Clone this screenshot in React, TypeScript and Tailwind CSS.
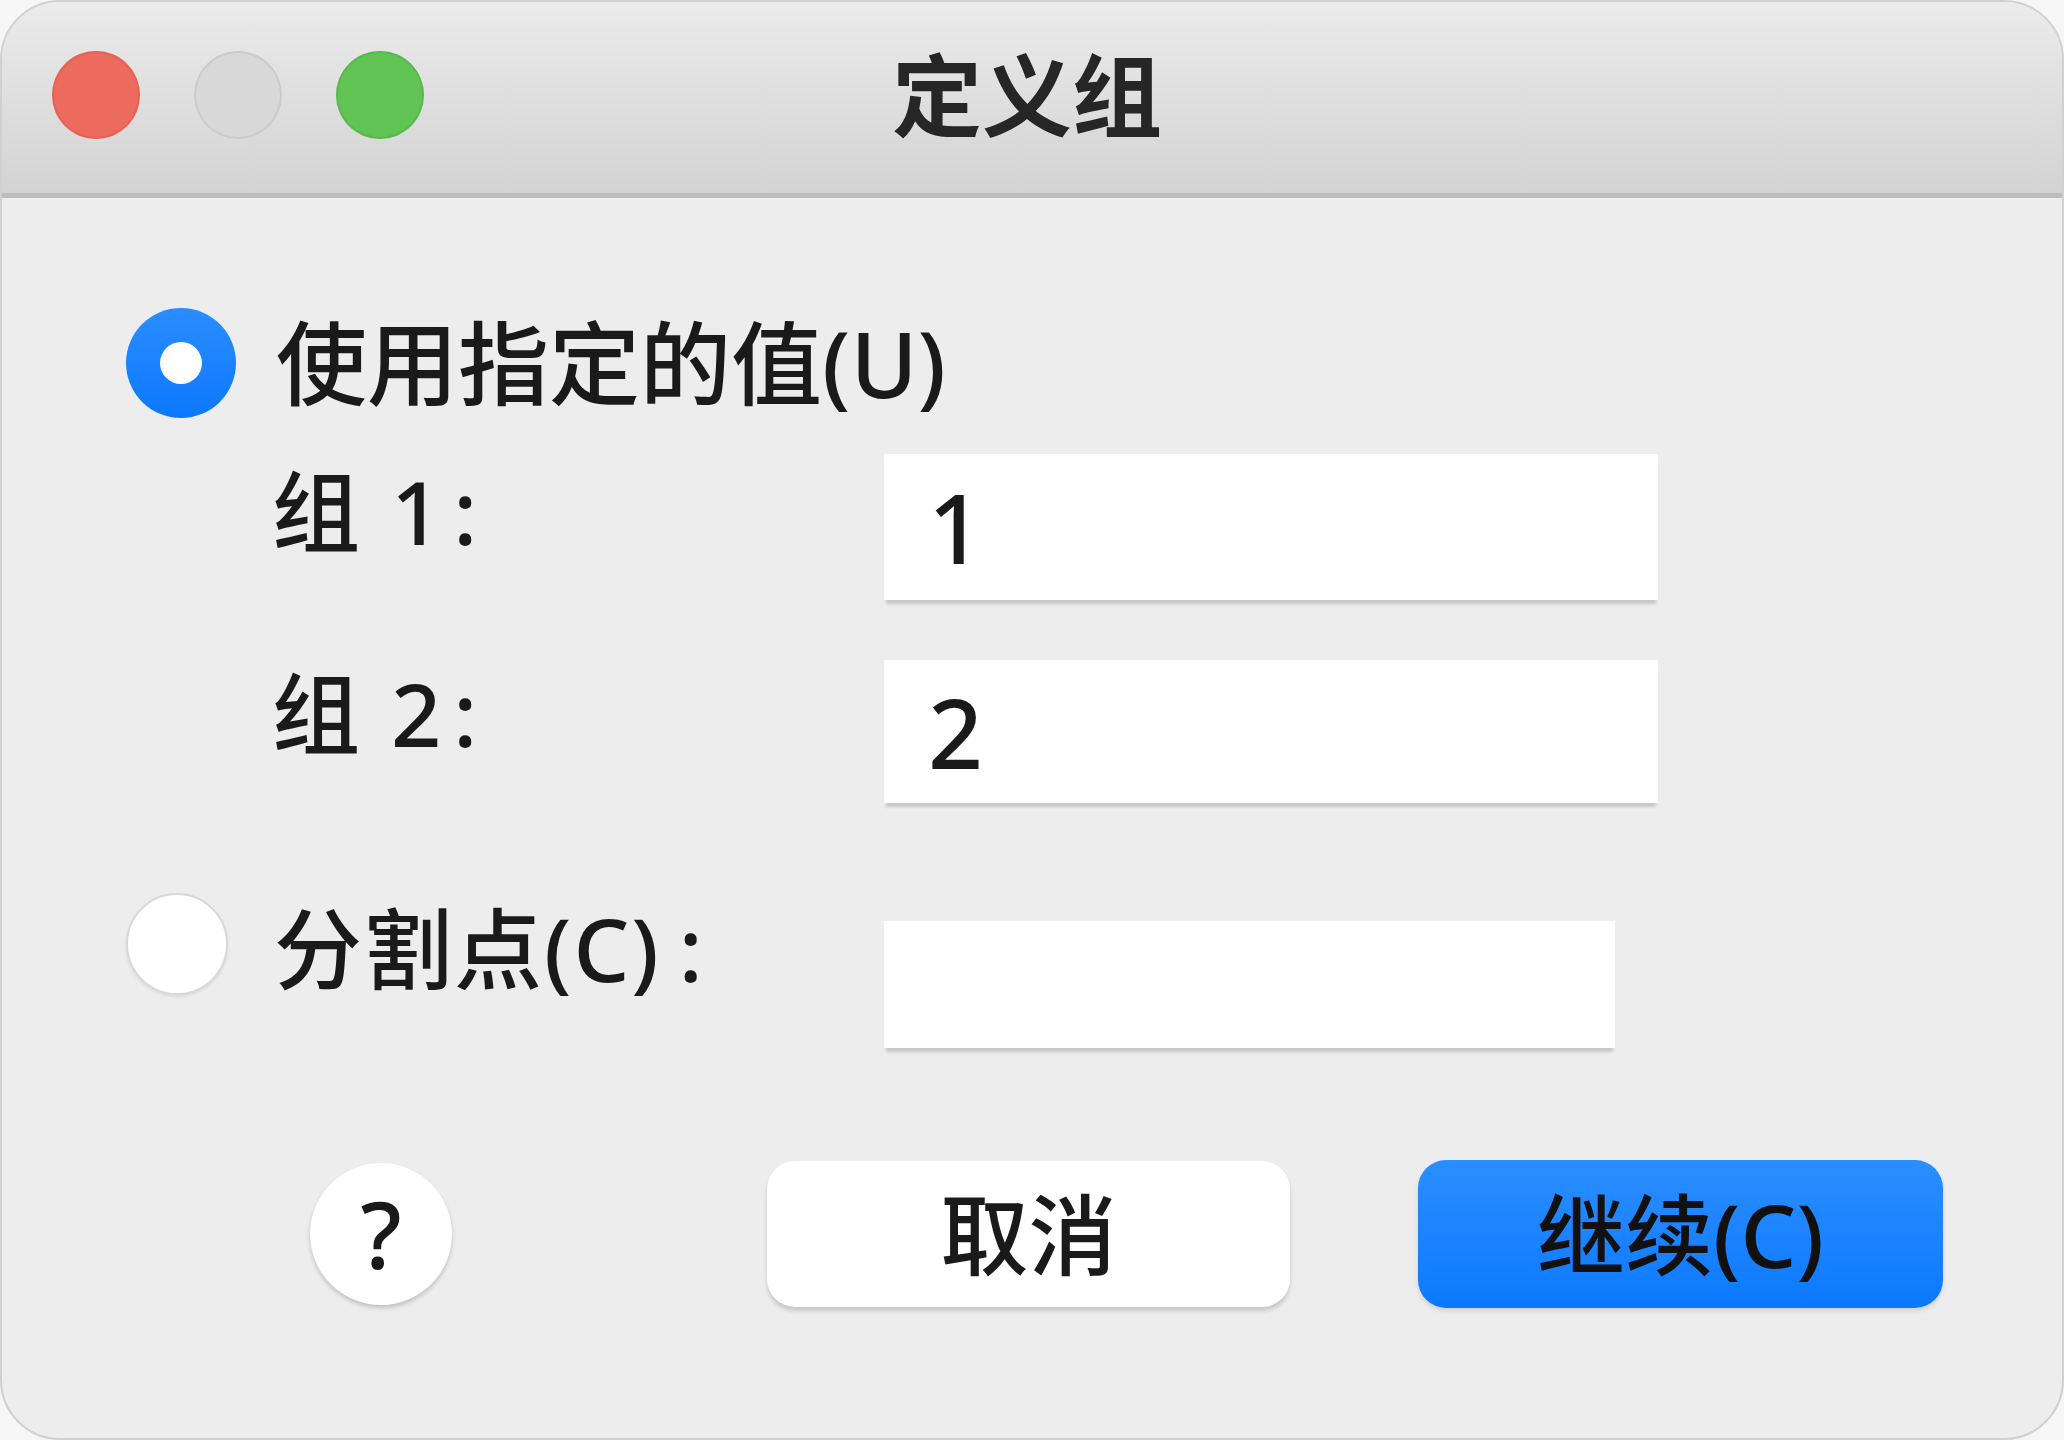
import React from "react";

const font = { fontFamily: '"Noto Sans", "Noto Sans CJK SC", sans-serif' };

function TrafficLights() {
  return (
    <div className="flex items-center gap-[54px] pl-[50px]">
      <span className="block h-[88px] w-[88px] rounded-full bg-[#ed6a5e] shadow-[inset_0_0_0_2px_rgba(208,78,68,0.3)]" />
      <span className="block h-[88px] w-[88px] rounded-full bg-[#d8d8d8] shadow-[inset_0_0_0_2px_rgba(0,0,0,0.06)]" />
      <span className="block h-[88px] w-[88px] rounded-full bg-[#61c454] shadow-[inset_0_0_0_2px_rgba(70,160,60,0.3)]" />
    </div>
  );
}

function TextField({ value, width }: { value?: string; width: string }) {
  return (
    <div
      className={`${width} flex items-center bg-white pl-[44px] text-[96px] font-medium leading-none text-[#1a1a1a] shadow-[0_6px_3px_-2px_rgba(0,0,0,0.16)]`}
    >
      {value}
    </div>
  );
}

export default function App() {
  return (
    <div className="h-[1440px] w-[2064px] overflow-hidden bg-[#f6f6f6]" style={font}>
      <div className="flex h-full w-full flex-col overflow-hidden rounded-[60px] border-2 border-[#d0d0d0] bg-[#ededed]">
        {/* title bar */}
        <div className="grid h-[196px] shrink-0 grid-cols-[1fr_auto_1fr] items-center border-b-[5px] border-[#bcbcbc] bg-gradient-to-b from-[#ebebeb] to-[#d3d3d3] pb-[6px]">
          <TrafficLights />
          <div className="pr-[10px] text-[90px] font-bold leading-none text-[#262626]">定义组</div>
          <div />
        </div>

        {/* body */}
        <div className="flex flex-col pl-[124px] font-medium text-[#1a1a1a]">
          <div className="mt-[110px] flex h-[110px] items-center gap-[40px]">
            <span className="flex h-[110px] w-[110px] items-center justify-center rounded-full bg-gradient-to-b from-[#2a8dff] to-[#0a78ff]">
              <span className="block h-[42px] w-[42px] rounded-full bg-white" />
            </span>
            <span className="text-[91px] leading-none">使用指定的值(U)</span>
          </div>

          <div className="mt-[36px] flex h-[146px] items-start">
            <span className="w-[758px] pl-[146px] pt-[13px] text-[88px] leading-none tracking-[4px]">
              组 1<span className="ml-[8px]">:</span>
            </span>
            <TextField value="1" width="w-[774px] h-[146px]" />
          </div>

          <div className="mt-[60px] flex h-[143px] items-start">
            <span className="w-[758px] pl-[146px] pt-[9px] text-[88px] leading-none tracking-[4px]">
              组 2<span className="ml-[8px]">:</span>
            </span>
            <TextField value="2" width="w-[774px] h-[143px]" />
          </div>

          <div className="mt-[90px] flex items-start">
            <span className="block h-[102px] w-[102px] shrink-0 rounded-full border-2 border-[#d8d8d8] bg-white shadow-[0_2px_3px_rgba(0,0,0,0.08)]" />
            <span className="ml-[46px] w-[610px] pt-[11px] text-[88px] leading-none tracking-[2px]">
              分割点(C)<span className="ml-[18px]">:</span>
            </span>
            <div className="mt-[28px]">
              <TextField width="w-[731px] h-[127px]" />
            </div>
          </div>

          {/* buttons */}
          <div className="mt-[112px] flex items-center">
            <span className="ml-[184px] flex h-[142px] w-[142px] items-center justify-center rounded-full bg-white text-[92px] leading-none text-[#1a1a1a] shadow-[0_3px_4px_rgba(0,0,0,0.18)]">
              ?
            </span>
            <button className="ml-[315px] flex h-[146px] w-[523px] items-center justify-center rounded-[28px] bg-white text-[88px] font-medium leading-none text-[#1a1a1a] shadow-[0_4px_4px_rgba(0,0,0,0.16)]">
              取消
            </button>
            <button className="ml-[128px] flex h-[148px] w-[525px] items-center justify-center rounded-[28px] bg-gradient-to-b from-[#2a8eff] to-[#0a79ff] text-[88px] font-medium leading-none text-[#111] shadow-[0_3px_4px_rgba(0,0,0,0.12)]">
              继续(C)
            </button>
          </div>
        </div>
      </div>
    </div>
  );
}
